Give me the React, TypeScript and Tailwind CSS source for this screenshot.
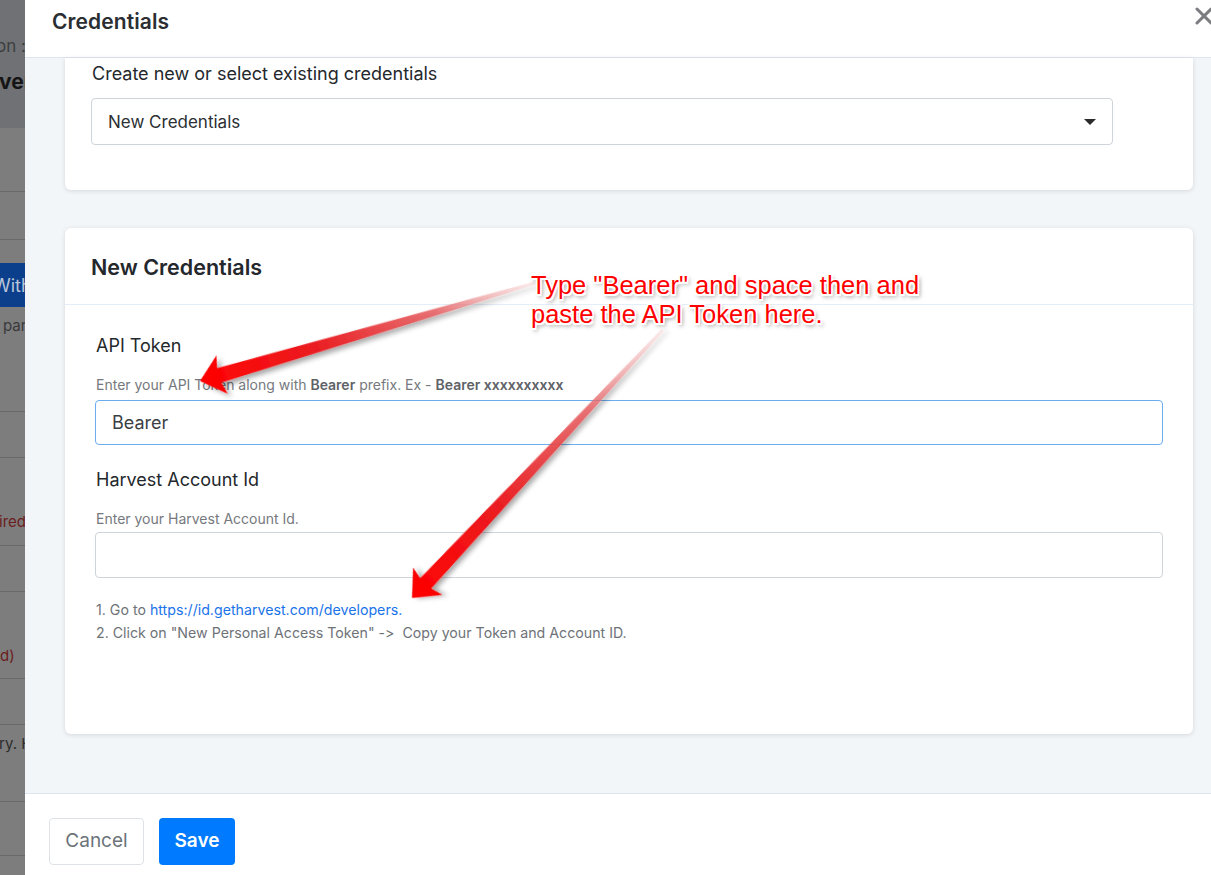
import { X } from "lucide-react"

const font = { fontFamily: "Inter, 'Noto Sans', sans-serif" }

// Strip of the page behind the dimmed modal backdrop
function BackdropStrip() {
  return (
    <div className="w-[25px] shrink-0 flex flex-col bg-[#7d7d7d] overflow-hidden" style={font}>
      <div className="h-[128px] bg-[#6f7174] flex flex-col items-end">
        <span className="mt-[34px] text-[17px] text-[#3c3e40] whitespace-nowrap mr-[-1px]">on :</span>
        <span className="mt-[6px] self-start ml-[-1px] text-[21px] font-bold text-[#151515] whitespace-nowrap">vent</span>
      </div>
      <div className="h-[64px] border-b border-[#686868]" />
      <div className="h-[48px] border-b border-[#686868]" />
      <div className="h-[23px]" />
      <div className="h-[44px] bg-[#0b3f8b] flex items-center">
        <span className="ml-[-7px] text-[18px] text-[#b9c4d8] whitespace-nowrap">With</span>
      </div>
      <div className="h-[105px] border-b border-[#686868] flex">
        <span className="ml-[3px] mt-[8px] text-[15px] text-[#3a3a3a] whitespace-nowrap">part</span>
      </div>
      <div className="h-[46px] border-b border-[#686868]" />
      <div className="h-[88px] border-b border-[#686868] flex">
        <span className="ml-[-1px] mt-[53px] text-[15px] text-[#6b1d1d] whitespace-nowrap">ired</span>
      </div>
      <div className="h-[46px] border-b border-[#686868]" />
      <div className="h-[87px] border-b border-[#686868] flex">
        <span className="mt-[53px] text-[15px] text-[#6b1d1d] whitespace-nowrap">d)</span>
      </div>
      <div className="h-[46px] border-b border-[#686868]" />
      <div className="h-[77px] border-b border-[#686868] flex">
        <span className="ml-[-1px] mt-[8px] text-[15px] text-[#2d2d2d] whitespace-nowrap">ry. Here</span>
      </div>
      <div className="h-[54px] border-b border-[#686868]" />
      <div className="flex-1" />
    </div>
  )
}

function Field({
  label,
  help,
  value,
  focused,
  gap,
}: {
  label: string
  help: React.ReactNode
  value?: string
  focused?: boolean
  gap: string
}) {
  return (
    <div>
      <div className="text-[18px] text-[#24282c] leading-[24px] pl-[1px]">{label}</div>
      <div className="mt-[18px] text-[14px] text-[#75797e] leading-[18px] pl-[1px]">{help}</div>
      <div
        className={
          focused
            ? `${gap} h-[45px] rounded-[4px] border border-[#6aaef0] flex items-center px-[16px] text-[18px] text-[#3b3f44]`
            : `${gap} h-[46px] rounded-[4px] border border-[#ced4da] flex items-center px-[16px] text-[18px] text-[#3b3f44]`
        }
      >
        {value}
      </div>
    </div>
  )
}

// Red callout arrow: tip at (x, y), tail along `angle` degrees, `len` long
function Arrow({ x, y, angle, len, id }: { x: number; y: number; angle: number; len: number; id: string }) {
  return (
    <g transform={`translate(${x} ${y}) rotate(${angle})`} filter="url(#arrow-shadow)">
      <defs>
        <linearGradient id={id} gradientUnits="userSpaceOnUse" x1="0" y1="0" x2={len} y2="0">
          <stop offset="0" stopColor="#ff0000" />
          <stop offset="0.35" stopColor="#ea1e22" />
          <stop offset="0.7" stopColor="#e65b5e" stopOpacity="0.85" />
          <stop offset="1" stopColor="#f4c4c4" stopOpacity="0.35" />
        </linearGradient>
      </defs>
      <polygon
        points={`0,0 23,-20 20,-7.5 ${len},-1.5 ${len},1.5 20,7.5 23,20`}
        fill={`url(#${id})`}
      />
    </g>
  )
}

export default function App() {
  return (
    <div className="relative w-[1211px] h-[875px] flex overflow-hidden bg-white">
      <BackdropStrip />

      <div className="flex-1 flex flex-col min-w-0 [font-variant-ligatures:no-contextual]" style={font}>
        {/* Modal header */}
        <div className="h-[58px] shrink-0 bg-white border-b border-[#dfe6f1] flex items-center justify-between pl-[27px]">
          <h2 className="text-[21px] font-semibold text-[#2a2e33] tracking-[0.1px] -mt-[13px]">Credentials</h2>
          <X size={28} strokeWidth={2.6} className="text-[#7b7d80] -mt-[25px] mr-[-7px]" />
        </div>

        {/* Modal body */}
        <div className="flex-1 bg-[#f3f6f9] pl-[40px] pr-[18px] flex flex-col">
          <div className="h-[132px] bg-white rounded-b-[6px] shadow-[0_1px_5px_rgba(0,0,0,0.12)] pl-[26px] pr-[80px] pt-[5px]">
            <div className="text-[18px] text-[#24282c] leading-[22px] pl-[1px]">Create new or select existing credentials</div>
            <div className="mt-[13px] h-[47px] rounded-[4px] border border-[#ced4da] flex items-center justify-between pl-[16px] pr-[16px]">
              <span className="text-[17px] text-[#2b2f33] mt-[2px]">New Credentials</span>
              <span className="w-0 h-0 border-l-[6px] border-r-[6px] border-t-[6px] border-l-transparent border-r-transparent border-t-[#2b2b2b] mt-[1px]" />
            </div>
          </div>

          <div className="mt-[38px] h-[506px] bg-white rounded-[6px] shadow-[0_1px_5px_rgba(0,0,0,0.12)] flex flex-col">
            <div className="h-[77px] border-b border-[#e4eef8] flex items-center pl-[26px]">
              <h3 className="text-[21.5px] font-semibold text-[#24282c] mt-[3px]">New Credentials</h3>
            </div>
            <div className="px-[30px] pt-[29px] flex flex-col gap-[23px]">
              <Field
                label="API Token"
                focused
                gap="mt-[6px]"
                value="Bearer"
                help={
                  <>
                    Enter your API Token along with <b className="font-semibold text-[#5e6267]">Bearer</b> prefix. Ex -{" "}
                    <b className="font-semibold text-[#5e6267]">Bearer xxxxxxxxxx</b>
                  </>
                }
              />
              <Field label="Harvest Account Id" gap="mt-[4px]" help="Enter your Harvest Account Id." />
            </div>
            <div className="px-[31px] mt-[20px] text-[14.2px] leading-[23px] text-[#6e7378]">
              <div>
                1. Go to <span className="text-[#1a73e8]">https://id.getharvest.com/developers.</span>
              </div>
              <div>2. Click on "New Personal Access Token" -&gt;&nbsp; Copy your Token and Account ID.</div>
            </div>
          </div>
        </div>

        {/* Modal footer */}
        <div className="h-[82px] shrink-0 bg-white border-t border-[#dde4f0] flex items-start gap-[15px] pl-[24px] pt-[24px]">
          <button className="h-[47px] w-[95px] rounded-[4px] border border-[#dee2e6] text-[19px] text-[#6c737a]">
            Cancel
          </button>
          <button className="h-[47px] w-[76px] rounded-[4px] bg-[#007bff] text-[19px] font-semibold text-white">
            Save
          </button>
        </div>
      </div>

      {/* Annotation layer */}
      <svg className="absolute inset-0 pointer-events-none" width="1211" height="875">
        <defs>
          <filter id="arrow-shadow" x="-20%" y="-20%" width="140%" height="140%">
            <feDropShadow dx="3" dy="4" stdDeviation="2.5" floodColor="#000" floodOpacity="0.35" />
          </filter>
        </defs>
        <Arrow id="arrow-a" x={200} y={381} angle={-16.3} len={349} />
        <Arrow id="arrow-b" x={412} y={598} angle={-46.9} len={367} />
      </svg>
      <div
        className="absolute left-[531px] top-[271px] text-[25.5px] leading-[29px] text-[#ff0000] [text-shadow:-1.5px_-1.5px_0_#fff,1.5px_-1.5px_0_#fff,-1.5px_1.5px_0_#fff,1.5px_1.5px_0_#fff,0_1.5px_0_#fff,0_-1.5px_0_#fff,2px_3px_4px_rgba(0,0,0,0.5)]"
        style={{ fontFamily: "'Liberation Sans', Arial, sans-serif" }}
      >
        Type "Bearer" and space then and
        <br />
        paste the API Token here.
      </div>
    </div>
  )
}
